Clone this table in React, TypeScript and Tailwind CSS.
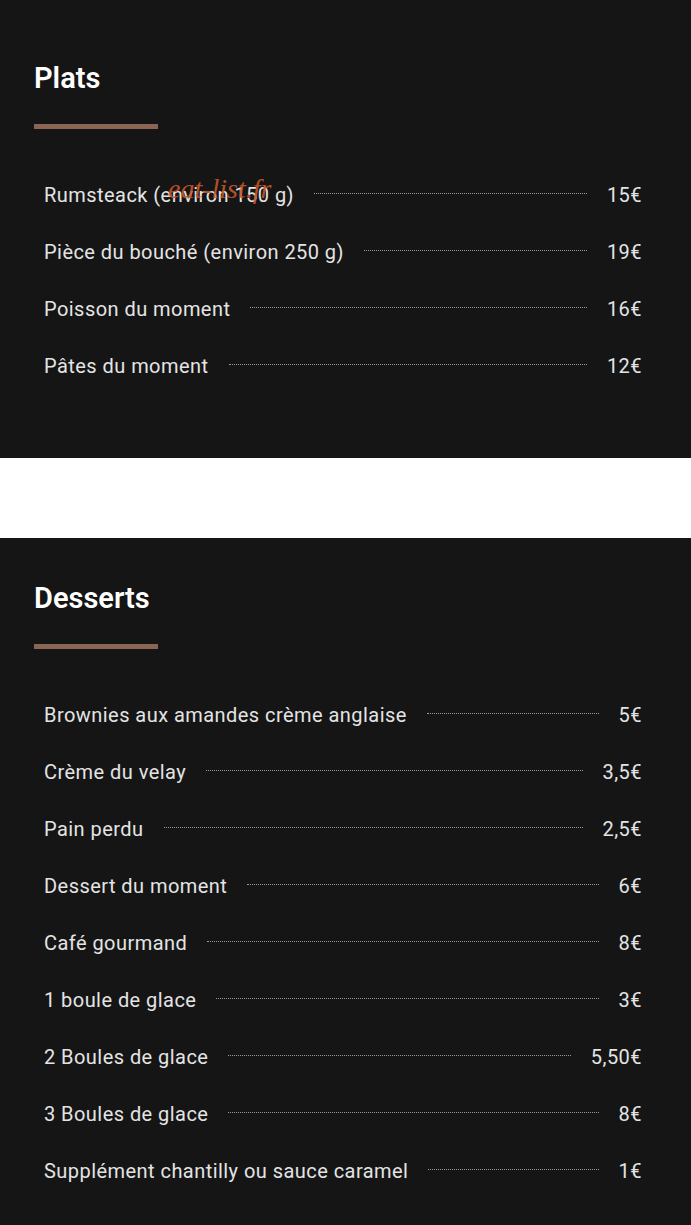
const plats = [
  { name: "Rumsteack (environ 150 g)", price: "15€" },
  { name: "Pièce du bouché (environ 250 g)", price: "19€" },
  { name: "Poisson du moment", price: "16€" },
  { name: "Pâtes du moment", price: "12€" },
];

const desserts = [
  { name: "Brownies aux amandes crème anglaise", price: "5€" },
  { name: "Crème du velay", price: "3,5€" },
  { name: "Pain perdu", price: "2,5€" },
  { name: "Dessert du moment", price: "6€" },
  { name: "Café gourmand", price: "8€" },
  { name: "1 boule de glace", price: "3€" },
  { name: "2 Boules de glace", price: "5,50€" },
  { name: "3 Boules de glace", price: "8€" },
  { name: "Supplément chantilly ou sauce caramel", price: "1€" },
];

type Item = { name: string; price: string };

function MenuRow({ name, price }: Item) {
  return (
    <li className="flex items-center h-[57px] text-[20px] tracking-[0.45px] text-[#e4e4e4]">
      <span className="whitespace-nowrap">{name}</span>
      <span className="flex-1 mx-5 mt-[-2px] border-b border-dotted border-[#9a9a9a]" />
      <span className="whitespace-nowrap">{price}</span>
    </li>
  );
}

function MenuSection({
  title,
  items,
  top,
  children,
}: {
  title: string;
  items: Item[];
  top: string;
  children?: React.ReactNode;
}) {
  return (
    <section className={`relative bg-[#151515] pb-[64px] pl-[34px] pr-[49px] ${top}`}>
      <h2 className="text-[29px] leading-[40px] font-semibold text-white">{title}</h2>
      <div className="mt-[26px] w-[124px] h-[5px] bg-[#8a6553]" />
      <ul className="mt-[37px] pl-[10px]">
        {items.map((it) => (
          <MenuRow key={it.name} {...it} />
        ))}
      </ul>
      {children}
    </section>
  );
}

export default function App() {
  return (
    <div className="w-[691px] bg-white" style={{ fontFamily: "Roboto, 'Liberation Sans', sans-serif" }}>
      <MenuSection title="Plats" items={plats} top="pt-[58px]">
        <span
          className="absolute left-[168px] top-[168px] text-[28px] italic text-[#c2572a] opacity-90 pointer-events-none"
          style={{ fontFamily: "'Liberation Serif', serif" }}
        >
          eat-list.fr
        </span>
      </MenuSection>
      <div className="h-[80px] bg-white" />
      <MenuSection title="Desserts" items={desserts} top="pt-[40px]" />
    </div>
  );
}
